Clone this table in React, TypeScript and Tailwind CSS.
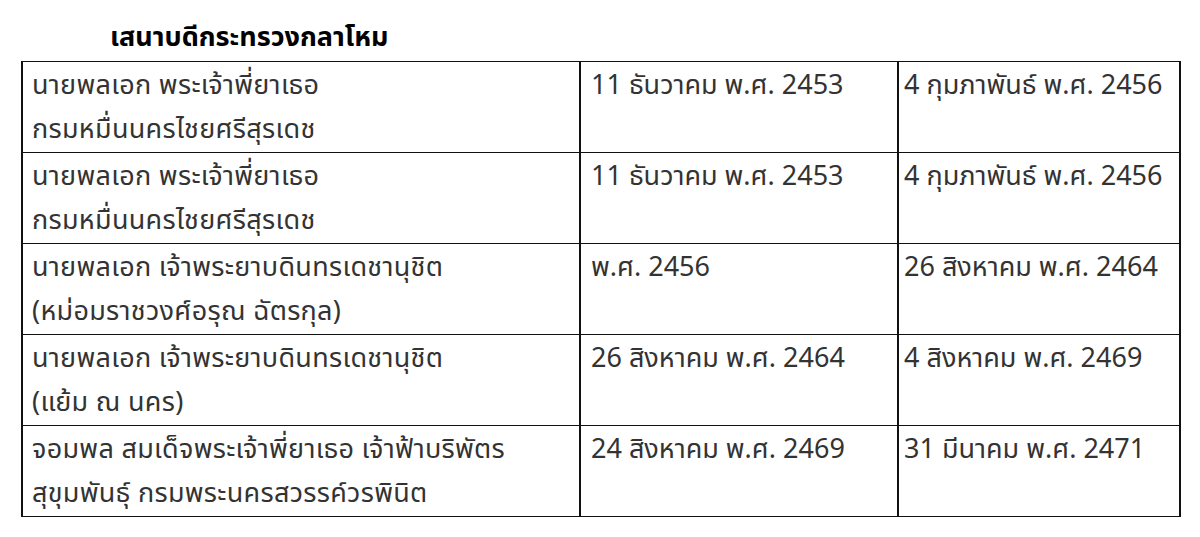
import React from "react";

const rows: [string[], string, string][] = [
  [["นายพลเอก พระเจ้าพี่ยาเธอ", "กรมหมื่นนครไชยศรีสุรเดช"], "11 ธันวาคม พ.ศ. 2453", "4 กุมภาพันธ์ พ.ศ. 2456"],
  [["นายพลเอก พระเจ้าพี่ยาเธอ", "กรมหมื่นนครไชยศรีสุรเดช"], "11 ธันวาคม พ.ศ. 2453", "4 กุมภาพันธ์ พ.ศ. 2456"],
  [["นายพลเอก เจ้าพระยาบดินทรเดชานุชิต", "(หม่อมราชวงศ์อรุณ ฉัตรกุล)"], "พ.ศ. 2456", "26 สิงหาคม พ.ศ. 2464"],
  [["นายพลเอก เจ้าพระยาบดินทรเดชานุชิต", "(แย้ม ณ นคร)"], "26 สิงหาคม พ.ศ. 2464", "4 สิงหาคม พ.ศ. 2469"],
  [["จอมพล สมเด็จพระเจ้าพี่ยาเธอ เจ้าฟ้าบริพัตร", "สุขุมพันธุ์ กรมพระนครสวรรค์วรพินิต"], "24 สิงหาคม พ.ศ. 2469", "31 มีนาคม พ.ศ. 2471"],
];

export default function App() {
  return (
    <div
      className="w-[1200px] h-[537px] bg-white text-[#333333] overflow-hidden"
      style={{ fontFamily: 'Tahoma, "Noto Sans Thai", "Noto Sans", "DejaVu Sans", sans-serif' }}
    >
      <div className="pl-[110px] pt-[23px] h-[61px] text-[27px] leading-[30px] font-bold text-black">
        เสนาบดีกระทรวงกลาโหม
      </div>
      <table className="ml-[21px] w-[1158px] border-collapse table-fixed text-[27px] leading-[44px]">
        <colgroup>
          <col className="w-[558px]" />
          <col className="w-[318px]" />
          <col className="w-[282px]" />
        </colgroup>
        <tbody>
          {rows.map((r, i) => (
            <tr key={i} className="h-[91px]">
              <td className="border-x-2 border-y border-[#111111] align-top pl-[9px] pt-[2px] tracking-[0.3px]">
                {r[0].map((l, j) => (
                  <div key={j} className="whitespace-nowrap">{l}</div>
                ))}
              </td>
              <td className="border-x-2 border-y border-[#111111] align-top pl-[10px] pt-[2px] whitespace-nowrap">{r[1]}</td>
              <td className="border-x-2 border-y border-[#111111] align-top pl-[5px] pt-[2px] whitespace-nowrap">{r[2]}</td>
            </tr>
          ))}
        </tbody>
      </table>
    </div>
  );
}
